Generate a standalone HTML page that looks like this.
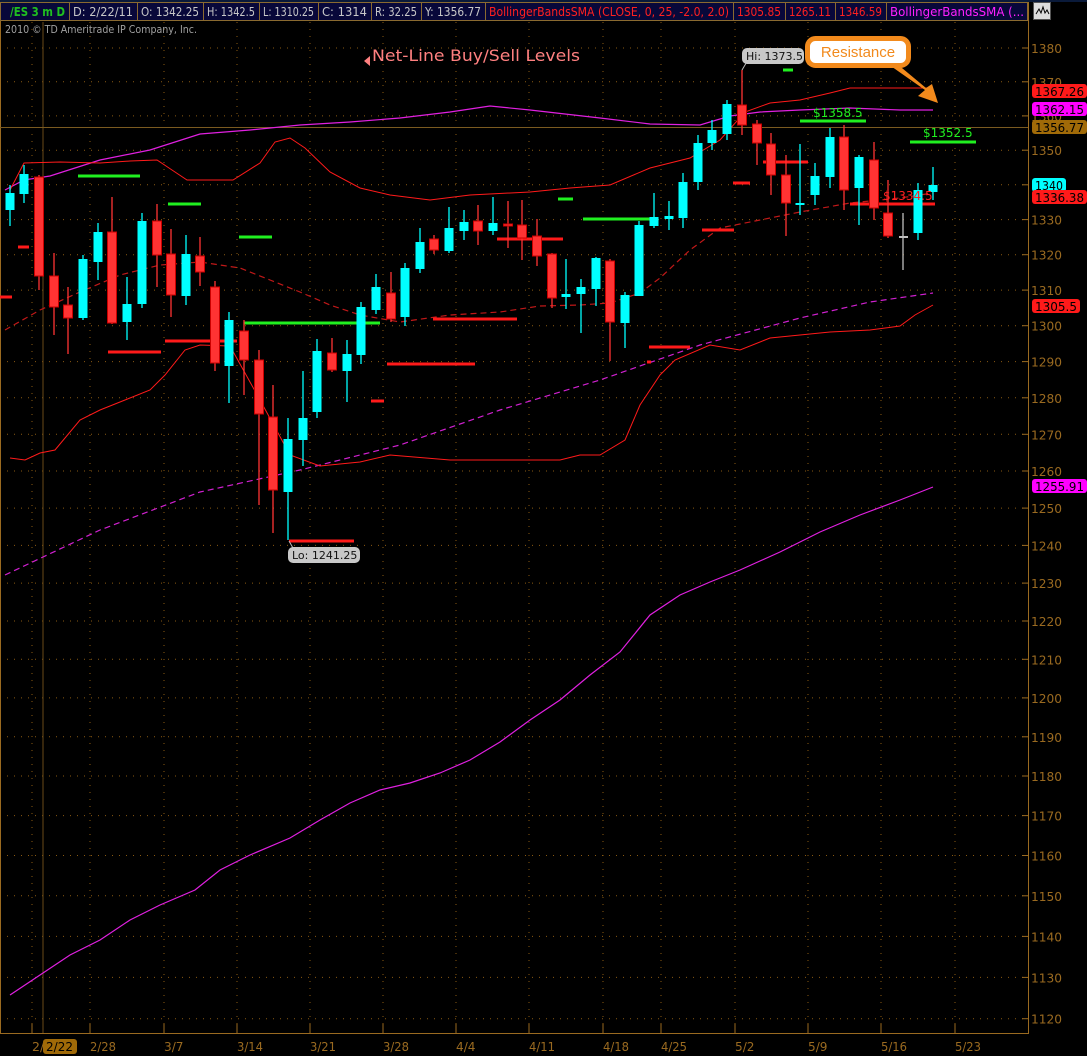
<!DOCTYPE html>
<html><head><meta charset="utf-8">
<style>
html,body{margin:0;padding:0;background:#000;width:1087px;height:1056px;overflow:hidden;}
svg{display:block;font-family:"DejaVu Sans","Liberation Sans",sans-serif;}
</style></head>
<body>
<svg id="c" width="1087" height="1056" xmlns="http://www.w3.org/2000/svg"></svg>
<script>
const S=document.getElementById('c');let h='';
const Y=p=>48+4650*Math.log(1380/p);
const GC='#8a5a12';
for(let p=1120;p<=1380;p+=10){const y=Y(p).toFixed(1);
h+=`<line x1="0" y1="${y}" x2="1024" y2="${y}" stroke="${GC}" stroke-dasharray="1,6"/>`;
h+=`<line x1="1022" y1="${y}" x2="1029" y2="${y}" stroke="#9a6a20"/>`;
h+=`<text x="1031" y="${(+y+5).toFixed(1)}" fill="#9a6a20" font-size="12.5" textLength="31" lengthAdjust="spacingAndGlyphs">${p}</text>`;}
const dates=[[90,'2/28'],[164,'3/7'],[237,'3/14'],[310,'3/21'],[383,'3/28'],[456,'4/4'],[529,'4/11'],[603,'4/18'],[661,'4/25'],[735,'5/2'],[808,'5/9'],[881,'5/16'],[955,'5/23']];
for(const[x] of dates)h+=`<line x1="${x}" y1="22" x2="${x}" y2="1030" stroke="${GC}" stroke-dasharray="1,6"/>`;
h+=`<line x1="32" y1="22" x2="32" y2="1030" stroke="${GC}" stroke-dasharray="1,6"/>`;
h+=`<line x1="43" y1="22" x2="43" y2="1034" stroke="#6a4a18"/>`;
h+=`<line x1="1028.5" y1="0" x2="1028.5" y2="1034" stroke="#9a6a20"/>`;
h+=`<line x1="0" y1="1033.5" x2="1028" y2="1033.5" stroke="#9a6a20"/>`;
h+=`<line x1="0.5" y1="20" x2="0.5" y2="1034" stroke="#9a6a20"/>`;
for(const[x,t] of dates){h+=`<line x1="${x}" y1="1024" x2="${x}" y2="1033" stroke="#9a6a20"/><text x="${x}" y="1051" fill="#9a6a20" font-size="12.5" textLength="${t.length*6.5}" lengthAdjust="spacingAndGlyphs">${t}</text>`;}
h+=`<line x1="32" y1="1024" x2="32" y2="1033" stroke="#9a6a20"/><text x="32" y="1051" fill="#9a6a20" font-size="12.5">2/</text>`;
h+=`<rect x="43" y="1039" width="34" height="15" rx="3" fill="#a06a08"/><text x="46" y="1051" fill="#000" font-size="12.5" textLength="27" lengthAdjust="spacingAndGlyphs">2/22</text>`;
h+=`<line x1="0" y1="127.5" x2="1028" y2="127.5" stroke="#7a5a20"/>`;
const pl=(pts,c,w,d)=>`<polyline fill="none" stroke="${c}" stroke-width="${w||1}" ${d?`stroke-dasharray="${d}"`:''} points="${pts.map(p=>p.join(',')).join(' ')}"/>`;
h+=pl([[10,995],[40,975],[70,955],[100,940],[130,920],[160,905],[195,890],[220,870],[250,855],[290,838],[320,820],[350,803],[380,790],[410,783],[440,773],[470,760],[500,742],[530,720],[560,700],[590,675],[620,652],[650,615],[680,595],[710,582],[740,570],[780,552],[820,532],[860,515],[900,500],[933,487]],'#e020e0',1.2);
h+=pl([[5,575],[100,530],[200,492],[300,470],[400,445],[500,410],[600,380],[700,345],[800,318],[870,302],[933,293]],'#d020d0',1.2,'6,4');
h+=pl([[5,190],[24,180],[50,176],[100,160],[150,150],[200,134],[250,130],[300,125],[350,122],[400,118],[450,112],[490,106],[530,110],[600,118],[650,124],[700,125],[730,116],[760,112],[800,110],[850,108],[900,110],[933,110]],'#e020e0',1.2);
h+=pl([[10,190],[24,163],[60,162],[100,163],[130,161],[157,160],[172,170],[187,180],[233,180],[260,163],[275,142],[290,138],[305,148],[330,172],[360,188],[390,195],[430,200],[470,195],[530,192],[570,188],[610,185],[650,168],[690,158],[720,140],[745,112],[770,103],[800,100],[830,93],[850,88],[933,88]],'#ff1a1a',1);
h+=pl([[10,458],[25,460],[40,453],[55,450],[80,420],[100,410],[125,400],[150,390],[165,375],[185,350],[200,345],[230,346],[260,400],[290,455],[320,466],[360,462],[390,455],[450,460],[560,460],[580,455],[600,455],[625,440],[640,405],[660,375],[675,360],[710,345],[740,350],[770,338],[800,335],[830,332],[870,330],[900,326],[915,315],[933,305]],'#ff1a1a',1);
h+=pl([[5,330],[40,310],[80,292],[120,275],[160,265],[200,262],[240,268],[270,280],[300,292],[330,305],[360,315],[400,322],[450,315],[500,312],[540,306],[580,305],[610,303],[640,293],[660,278],[690,250],[720,228],[760,220],[800,212],[850,203],[900,198],[933,193]],'#c01818',1.2,'6,4');
const G='#20f020',R='#ff1a1a';
const segs=[[78,140,176,G],[168,201,204,G],[239,272,237,G],[244,380,323,G],[558,573,199,G],[583,650,219,G],[783,793,70,G],[800,866,121,G],[910,976,142,G],
[0,12,297,R],[18,29,247,R],[108,161,352,R],[165,237,341,R],[371,384,401,R],[387,475,364,R],[433,517,319,R],[497,563,239,R],[649,690,347,R],[647,651,362,R],[702,734,230,R],[733,750,183,R],[763,808,162,R],[850,935,204,R],[289,354,541,R]];
for(const[a,b,y,c] of segs)h+=`<rect x="${a}" y="${y-1.5}" width="${b-a}" height="3" fill="${c}"/>`;
const C='#00ffff',RD='#ff3333',GR='#c0c0c0';
const cs=[[10,193,210,185,226,C],[24,174,194,165,203,C],[39,177,276,175,290,RD],[54,276,307,253,335,RD],[68,305,318,287,354,RD],[83,259,318,255,320,C],[98,232,262,223,280,C],[112,232,323,197,324,RD],[127,304,322,277,340,C],[142,221,304,213,308,C],[157,221,255,204,287,RD],[171,254,295,229,317,RD],[186,254,296,235,305,C],[200,256,272,237,286,RD],[215,287,363,281,371,RD],[229,320,366,312,403,C],[244,331,360,320,395,RD],[259,360,414,350,505,RD],[273,417,490,385,533,RD],[288,439,492,418,540,C],[303,418,440,371,466,C],[317,351,412,339,418,C],[332,353,370,338,372,RD],[347,354,371,340,402,C],[361,307,355,302,364,C],[376,287,310,274,314,C],[391,293,319,272,322,RD],[405,268,317,263,326,C],[420,242,269,228,273,C],[434,239,250,235,254,RD],[449,228,251,207,253,C],[464,222,231,210,240,C],[478,221,231,205,245,RD],[493,223,231,197,235,C],[508,224,226,201,248,RD],[522,225,238,200,260,RD],[537,236,256,219,266,RD],[552,254,298,253,308,RD],[566,294,297,259,309,C],[581,287,294,279,333,C],[596,258,289,257,306,C],[610,261,322,259,361,RD],[625,295,323,292,348,C],[639,225,296,221,296,C],[654,217,226,193,228,C],[669,216,219,201,230,C],[683,182,218,173,228,C],[698,143,182,135,190,C],[712,130,143,120,150,C],[727,104,134,100,140,C],[742,105,125,70,135,RD],[757,124,143,120,165,RD],[771,144,175,133,195,RD],[786,175,203,155,236,RD],[800,203,205,144,215,C],[815,176,195,163,205,C],[830,137,177,128,188,C],[844,137,190,125,210,RD],[859,157,188,155,225,C],[874,160,208,142,220,RD],[888,213,236,180,238,RD],[903,236,238,213,270,GR],[918,190,233,183,240,C],[933,185,192,167,200,C]];
for(const[x,t,b,wt,wb,c] of cs){h+=`<line x1="${x}" y1="${wt}" x2="${x}" y2="${wb}" stroke="${c}" stroke-width="1.3"/>`;
if(c==GR)h+=`<rect x="${x-4}" y="${t}" width="9" height="2" fill="${c}"/>`;
else h+=`<rect x="${x-4.5}" y="${t}" width="9" height="${Math.max(2,b-t)}" fill="${c}" ${c==RD?'stroke="#cc0000" stroke-width="1"':''}/>`;}
h+=`<text x="813" y="117" fill="#20f020" font-size="12">$1358.5</text>`;
h+=`<text x="923" y="137" fill="#20f020" font-size="12">$1352.5</text>`;
h+=`<text x="883" y="200" fill="#ff2020" font-size="12">$1334.5</text>`;
h+=`<line x1="742" y1="70" x2="748" y2="60" stroke="#bbb"/><rect x="742" y="48" width="62" height="16" rx="5" fill="#c8c8c8"/><text x="746" y="60" fill="#111" font-size="11">Hi: 1373.5</text>`;
h+=`<line x1="289" y1="541" x2="293" y2="548" stroke="#bbb"/><rect x="288" y="547" width="72" height="16" rx="5" fill="#c8c8c8"/><text x="292" y="559" fill="#111" font-size="11">Lo: 1241.25</text>`;
h+=`<polygon points="364,61 370,56 370,66" fill="#ff8080"/><text x="372" y="61" fill="#ff8080" font-size="16" textLength="208" lengthAdjust="spacingAndGlyphs">Net-Line Buy/Sell Levels</text>`;
h+=`<path d="M885,62 L925,90 L918,96 L938,103 L932,84 L926,88 L890,58Z" fill="#f28a1c"/>`;
h+=`<rect x="807.5" y="38.5" width="101" height="27" rx="8" fill="#fff" stroke="#f28a1c" stroke-width="5"/><text x="858" y="57" fill="#f28a1c" font-size="15" text-anchor="middle" font-family="Liberation Sans,sans-serif">Resistance</text>`;
const tags=[[91,'1367.26','#ff1a1a'],[109,'1362.15','#ff00ff'],[127,'1356.77','#a06a08'],[185,'1340','#00ffff'],[197,'1336.38','#ff1a1a'],[306,'1305.5','#ff1a1a'],[486,'1255.91','#ff00ff']];
for(const[y,t,c] of tags){const w=t.length*7+6;h+=`<rect x="1032" y="${y-7}" width="${w}" height="14" rx="3" fill="${c}"/><text x="1035" y="${y+5}" fill="#000" font-size="12" textLength="${t.length*7}" lengthAdjust="spacingAndGlyphs">${t}</text>`;}
h+=`<rect x="0" y="0" width="1087" height="2" fill="#0a1a3a"/>`;
h+=`<rect x="0.5" y="2.5" width="1027" height="18" fill="#08083a" stroke="#8a6a30"/>`;
const cells=[[0,69,'/ES 3 m D','#20c020',true],[69,137,'D: 2/22/11','#c8c8c8'],[137,203,'O: 1342.25','#c8c8c8'],[203,259,'H: 1342.5','#c8c8c8'],[259,318,'L: 1310.25','#c8c8c8'],[318,371,'C: 1314','#c8c8c8'],[371,421,'R: 32.25','#c8c8c8'],[421,485,'Y: 1356.77','#c8c8c8'],[485,733,'BollingerBandsSMA (CLOSE, 0, 25, -2.0, 2.0)','#ff2020'],[733,785,'1305.85','#ff2020'],[785,835,'1265.11','#ff2020'],[835,886,'1346.59','#ff2020'],[886,1028,'BollingerBandsSMA (...','#ff20ff']];
for(const[a,b,t,c,bd] of cells){const off=bd?10:4;h+=`<line x1="${a+0.5}" y1="3" x2="${a+0.5}" y2="20" stroke="#8a6a30"/><text x="${a+off}" y="16" fill="${c}" font-size="12" ${bd?'font-weight="bold"':''} textLength="${b-a-off-4}" lengthAdjust="spacingAndGlyphs">${t}</text>`;}
h+=`<rect x="1033.5" y="2.5" width="17" height="17" fill="#ddd" stroke="#555"/><path d="M1036,14 L1039,9 L1041,13 L1043,7 L1045,13 L1047,10 L1049,14" fill="none" stroke="#000"/>`;
h+=`<text x="5" y="33" fill="#a0a0a0" font-size="10.5" textLength="192" lengthAdjust="spacingAndGlyphs">2010 © TD Ameritrade IP Company, Inc.</text>`;
S.innerHTML=h;
</script>
</body></html>
